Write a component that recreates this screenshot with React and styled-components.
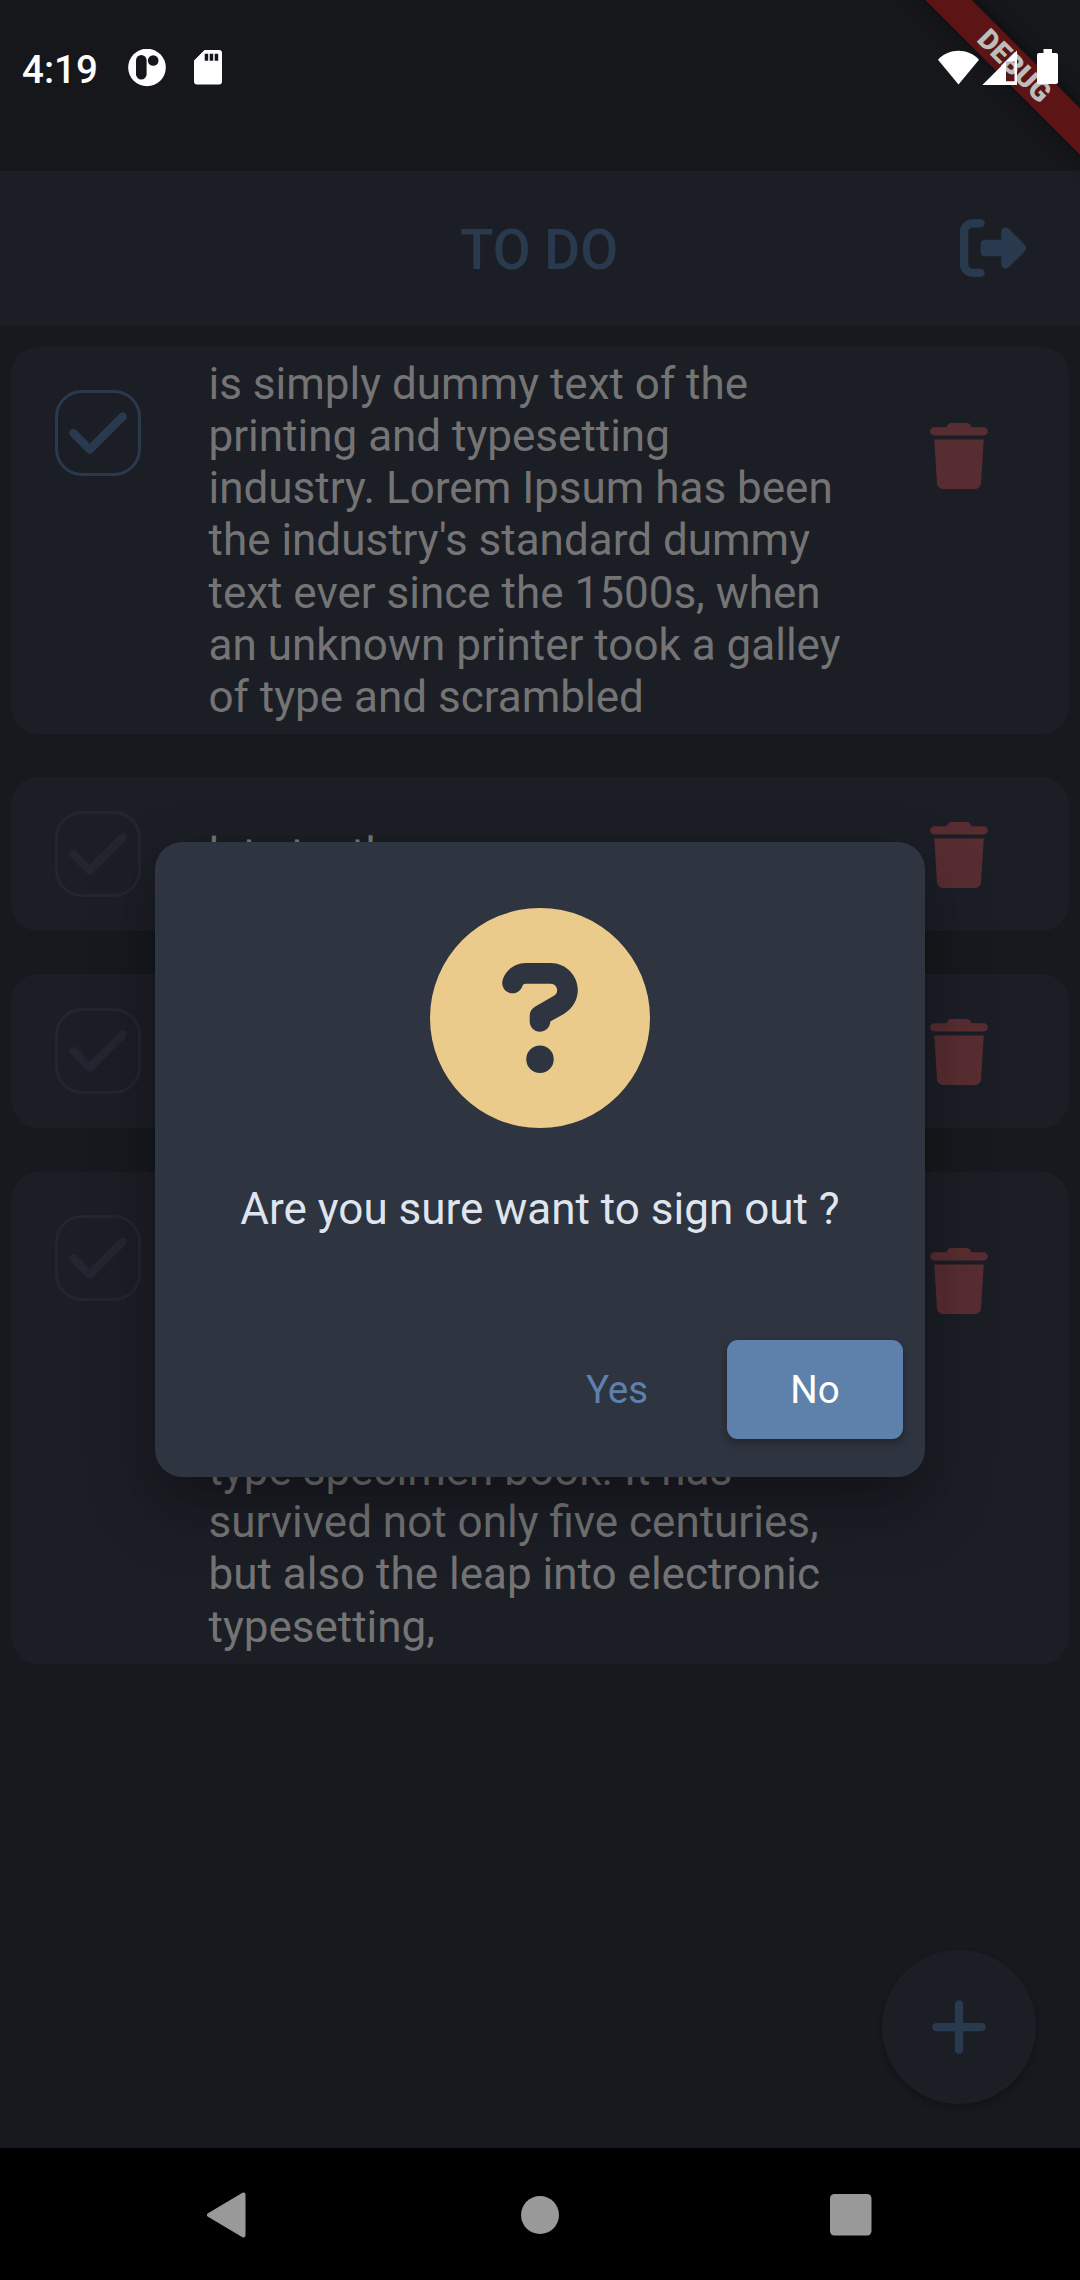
import React from "react";
import styled, { createGlobalStyle } from "styled-components";
import {
  FaCheck,
  FaCircleQuestion,
  FaPlus,
  FaRightFromBracket,
  FaTrash,
} from "react-icons/fa6";

const GlobalStyle = createGlobalStyle`
  * { box-sizing: border-box; }
  body { margin: 0; background: #16191d; }
  button { font: inherit; border: 0; padding: 0; background: none; }
  svg { display: block; flex: none; }
`;

const Screen = styled.div`
  position: relative;
  display: flex;
  flex-direction: column;
  width: 1080px;
  height: 2280px;
  overflow: hidden;
  background: #16191d;
  font-family: Roboto, "Liberation Sans", sans-serif;
`;

const StatusBar = styled.header`
  flex: none;
  display: flex;
  justify-content: space-between;
  height: 171px;
  padding: 49px 21px 0 22px;
  background: #15171b;
`;

const StatusGroup = styled.div`
  position: relative;
  z-index: 5;
  display: flex;
  align-items: flex-start;
  gap: ${(p) => p.$gap || 0}px;
  height: 38px;
`;

const Clock = styled.span`
  width: 78px;
  padding-top: 1px;
  font-size: 38.5px;
  line-height: 40px;
  font-weight: 500;
  color: #fff;
`;

const AppBar = styled.div`
  flex: none;
  display: grid;
  grid-template-columns: 154px 1fr 154px;
  align-items: center;
  height: 154px;
  padding: 0 11px 0 9px;
  background: #1c1e26;
  color: #293a4e;
`;

const Title = styled.h1`
  grid-column: 2;
  margin: 0;
  padding-top: 3px;
  text-align: center;
  font-size: 55px;
  font-weight: 500;
  line-height: 64px;
`;

const SignOutButton = styled.button`
  justify-self: end;
  margin-right: 43.5px;
  color: inherit;
`;

const List = styled.ul`
  flex: 1;
  display: flex;
  flex-direction: column;
  gap: 43.4px;
  margin: 0;
  padding: 21.7px 11px 0;
  list-style: none;
`;

const Card = styled.li`
  display: flex;
  align-items: flex-start;
  flex: none;
  height: ${(p) => p.$height}px;
  padding-left: 44px;
  border-radius: 27.5px;
  background: #1c1e26;
`;

const CheckBox = styled.div`
  flex: none;
  display: flex;
  align-items: center;
  justify-content: center;
  width: 86px;
  height: 86px;
  margin-top: ${(p) => (p.$tall ? 43.3 : 34)}px;
  border: 3px solid ${(p) => (p.$checked ? "#293a4e" : "#232630")};
  border-radius: 27px;
  color: ${(p) => (p.$checked ? "#293a4e" : "#232630")};
`;

const TaskText = styled.p`
  flex: none;
  width: 660px;
  margin: ${(p) => (p.$tall ? 11.2 : 51)}px 0 0 67.5px;
  font-size: 44px;
  line-height: 52.2px;
  color: #747474;
  white-space: pre;
`;

const DeleteButton = styled.button`
  margin: ${(p) => (p.$tall ? 76.3 : 44.5)}px 0 0 57px;
  color: #582d31;
`;

const AddButton = styled.button`
  position: absolute;
  right: 44px;
  bottom: 176px;
  display: flex;
  align-items: center;
  justify-content: center;
  width: 154px;
  height: 154px;
  border-radius: 50%;
  background: #1c1e26;
  color: #293a4e;
  box-shadow: 0 4px 7px rgba(0, 0, 0, 0.22);
`;

const NavBar = styled.nav`
  flex: none;
  display: grid;
  grid-template-columns: 1fr auto 1fr;
  align-items: center;
  height: 132px;
  padding: 1px 208px 0 206px;
  background: #000;

  & > :last-child {
    justify-self: end;
  }
`;

const Overlay = styled.div`
  position: absolute;
  inset: 171px 0 132px;
  display: flex;
  align-items: center;
  justify-content: center;
`;

const Dialog = styled.section`
  display: flex;
  flex-direction: column;
  align-items: center;
  width: 770px;
  height: 635px;
  padding: 66px 22px 38px;
  border-radius: 27.5px;
  background: #2e3440;
  box-shadow: 0 30px 66px 8px rgba(0, 0, 0, 0.2),
    0 22px 40px -10px rgba(0, 0, 0, 0.18);
`;

const Question = styled.p`
  margin: 55px 0 0;
  font-size: 44px;
  line-height: 52px;
  color: #dfe5ef;
  white-space: nowrap;
`;

const Actions = styled.div`
  align-self: stretch;
  display: flex;
  justify-content: flex-end;
  gap: 22px;
  margin-top: auto;
`;

const ActionButton = styled.button`
  width: 176px;
  height: 99px;
  padding-bottom: 1px;
  border-radius: 11px;
  font-size: 38.5px;
  line-height: 45px;
  color: ${(p) => (p.$filled ? "#fff" : "#5e81ac")};
  background: ${(p) => (p.$filled ? "#5e81ac" : "transparent")};
  box-shadow: ${(p) => (p.$filled ? "0 4px 8px rgba(0,0,0,.3)" : "none")};
`;

const Ribbon = styled.div`
  position: absolute;
  z-index: 4;
  left: 814.4px;
  top: 48.5px;
  width: 400px;
  height: 33px;
  padding-left: 1px;
  transform: rotate(45deg);
  background: #5c1415;
  box-shadow: 0 0 16px rgba(0, 0, 0, 0.5);
  color: #bdbdbd;
  font-size: 28.2px;
  font-weight: 900;
  line-height: 33px;
  text-align: center;
`;

const PIcon = () => (
  <svg width="38" height="38" viewBox="0 0 38 38">
    <circle cx="19" cy="18.5" r="18.8" fill="#fff" />
    <rect x="8" y="6" width="10.6" height="24.5" rx="5.3" fill="#15171b" />
    <circle cx="25.2" cy="11.5" r="5.3" fill="#15171b" />
  </svg>
);

const SdIcon = () => (
  <svg width="28" height="38" viewBox="0 0 28 38">
    <path
      d="M10.5 1H25a3 3 0 0 1 3 3v28.500a3 3 0 0 1-3 3H3a3 3 0 0 1-3-3V11.500z"
      fill="#fff"
    />
    <path d="M10.700 4.700h3.500v7h-3.500zM15.700 4.700h3.500v7h-3.500zM20.700 4.700h3.500v7h-3.500z" fill="#15171b" />
  </svg>
);

const StatusIcons = () => (
  <svg width="121" height="38" viewBox="0 0 121 38">
    <path d="M0 10.700C11 -1.200 30 -1.200 41 10.700L20.500 35.500z" fill="#fff" />
    <path
      d="M79 1.500V36H44.300zM68 12.600V32.200H76.500V12.600z"
      fill="#fff"
      fillRule="evenodd"
    />
    <path
      d="M105.500 0H114v4h4a2 2 0 0 1 2 2v27a2 2 0 0 1-2 2H101a2 2 0 0 1-2-2V6a2 2 0 0 1 2-2h4.500z"
      fill="#fff"
    />
  </svg>
);

const BackIcon = () => (
  <svg width="41" height="46" viewBox="0 0 41 46">
    <path
      d="M37.500 2.500V43.500L3 23z"
      fill="#999"
      stroke="#999"
      strokeWidth="4"
      strokeLinejoin="round"
    />
  </svg>
);

const HomeIcon = () => (
  <svg width="40" height="40" viewBox="0 0 40 40">
    <circle cx="21" cy="20" r="19" fill="#999" />
  </svg>
);

const RecentIcon = () => (
  <svg width="42" height="42" viewBox="0 0 42 42">
    <rect width="41.500" height="41.500" rx="4.500" fill="#999" />
  </svg>
);

const tasks = [
  {
    checked: true,
    tall: true,
    height: 387,
    lines: [
      "is simply dummy text of the",
      "printing and typesetting",
      "industry. Lorem Ipsum has been",
      "the industry's standard dummy",
      "text ever since the 1500s, when",
      "an unknown printer took a galley",
      "of type and scrambled",
    ],
  },
  { height: 154, lines: ["lets testh"] },
  { height: 154, lines: [""] },
  {
    tall: true,
    height: 492,
    lines: [
      "",
      "",
      "",
      "",
      "",
      "type specimen book. It has",
      "survived not only five centuries,",
      "but also the leap into electronic",
      "typesetting,",
    ],
  },
];

export default function App() {
  return (
    <>
      <GlobalStyle />
      <Screen>
        <StatusBar>
          <StatusGroup $gap={28}>
            <Clock>4:19</Clock>
            <PIcon />
            <SdIcon />
          </StatusGroup>
          <StatusGroup>
            <StatusIcons />
          </StatusGroup>
        </StatusBar>
        <AppBar>
          <Title>TO DO</Title>
          <SignOutButton aria-label="Sign out">
            <FaRightFromBracket size={66} />
          </SignOutButton>
        </AppBar>
        <List>
          {tasks.map((task, i) => (
            <Card key={i} $height={task.height}>
              <CheckBox $checked={task.checked} $tall={task.tall}>
                <FaCheck size={66} />
              </CheckBox>
              <TaskText $tall={task.tall}>{task.lines.join("\n")}</TaskText>
              <DeleteButton $tall={task.tall} aria-label="Delete">
                <FaTrash size={66} />
              </DeleteButton>
            </Card>
          ))}
        </List>
        <NavBar>
          <BackIcon />
          <HomeIcon />
          <RecentIcon />
        </NavBar>
        <AddButton aria-label="Add">
          <FaPlus size={66} />
        </AddButton>
        <Overlay>
          <Dialog>
            <FaCircleQuestion size={220} color="#ebcb8b" />
            <Question>Are you sure want to sign out ?</Question>
            <Actions>
              <ActionButton>Yes</ActionButton>
              <ActionButton $filled>No</ActionButton>
            </Actions>
          </Dialog>
        </Overlay>
        <Ribbon>DEBUG</Ribbon>
      </Screen>
    </>
  );
}
